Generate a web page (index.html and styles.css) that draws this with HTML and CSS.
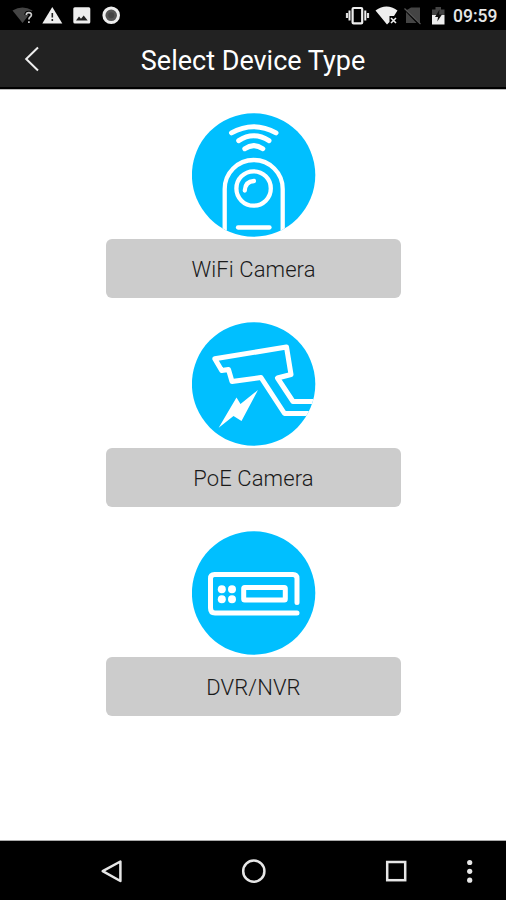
FILE: index.html
```html
<!DOCTYPE html>
<html lang="en">
<head>
<meta charset="utf-8">
<title>Select Device Type</title>
<link rel="stylesheet" href="styles.css">
</head>
<body>
<div class="screen">
  <div class="status">
    <svg width="130" height="30" viewBox="0 0 130 30">
      <path d="M12.500 10.500Q22.500 4.500 32.500 10.500L22.500 23Z" fill="#444"/>
      <path d="M26.300 15Q26.300 12.700 28.900 12.700T31.400 15Q31.400 16.300 29.900 17.200Q28.900 17.800 28.900 19.500M28.900 21.200V23" fill="none" stroke="#000" stroke-width="4"/>
      <path d="M26.300 15Q26.300 12.700 28.900 12.700T31.400 15Q31.400 16.300 29.900 17.200Q28.900 17.800 28.900 19.500M28.900 21.200V23" fill="none" stroke="#ccc" stroke-width="1.700"/>
      <path d="M52.300 7L62.300 23.500H42.300Z" fill="#eee"/>
      <path d="M52.300 13V17.500M52.300 19V21" stroke="#222" stroke-width="1.600"/>
      <rect x="73.300" y="7.300" width="17" height="16.200" rx="1.500" fill="#eee"/>
      <path d="M76 20.500L79 16.500L81 18.800L83.700 15.500L87.700 20.500Z" fill="#222"/>
      <circle cx="111.200" cy="15.300" r="7.300" fill="#555" stroke="#eee" stroke-width="3"/>
      <circle cx="111.200" cy="15.300" r="3" fill="#444"/>
    </svg>
    <div class="status-right">
      <svg width="112" height="30" viewBox="340 0 112 30">
        <rect x="352.600" y="8" width="9.600" height="15.400" rx="1" fill="none" stroke="#eee" stroke-width="2.200"/>
        <path d="M349.500 10.500V20.500M365.300 10.500V20.500" stroke="#eee" stroke-width="2"/>
        <path d="M347 13V18M368 13V18" stroke="#ddd" stroke-width="2.200"/>
        <path d="M375.500 10.500Q386.500 2.500 397.500 10.500L394 16H389.500V22L387 24.500Z" fill="#eee"/>
        <path d="M391 18L396 23M396 18L391 23" stroke="#eee" stroke-width="1.600"/>
        <path d="M411 7.500H420V23L406 10.500ZM406 12V23H416.500Z" fill="#444"/>
        <path d="M404.500 8.500L420.500 24" stroke="#555" stroke-width="1.200"/>
        <path d="M432 15V9.500H435.500V7H441V9.500H444.500V15Z" fill="#444"/>
        <path d="M432 15H444.500V24.500H432Z" fill="#eee"/>
        <path d="M439.500 9.500L435 17H438L437.300 21.500L442 14.500H439Z" fill="#111"/>
      </svg>
      <span class="clock">09:59</span>
    </div>
  </div>
  <header class="bar">
    <svg class="back" width="20" height="28" viewBox="0 0 20 28"><path d="M15 2.500L3.200 14L15 25.500" fill="none" stroke="#eee" stroke-width="2"/></svg>
    <h1>Select Device Type</h1>
  </header>
  <main>
    <section class="device">
      <svg width="124" height="124" viewBox="7 5 124 124">
        <defs><clipPath id="disc"><circle cx="68.600" cy="67" r="61.700"/></clipPath></defs>
        <circle cx="68.600" cy="67" r="61.700" fill="#00bfff"/>
        <g class="line" clip-path="url(#disc)">
          <path class="waves" d="M46.500 24.900Q68.600 12.500 91 24.900M53.700 32.600Q68.600 23 84 32.600M59.800 40.700Q68.600 34.500 77.800 40.700"/>
          <path d="M39.700 130V81A29 29 0 0 1 97.700 81V130"/>
          <circle cx="68.600" cy="80.500" r="17.200"/>
          <path d="M59.800 82.500Q60.200 73.500 69 73"/>
          <path d="M53 119.500H84.500"/>
        </g>
      </svg>
      <button>WiFi Camera</button>
    </section>
    <section class="device">
      <svg width="124" height="124" viewBox="7 5 124 124">
        <circle cx="68.600" cy="67" r="61.700" fill="#00bfff"/>
        <g class="line sharp" clip-path="url(#disc)">
          <path d="M135 84.500H108L92.500 61L106 57.500L101.500 30L29.800 41.800L36.700 53.500L43.500 52.500L47 64.500L76 60.500L99.500 96.500H135"/>
        </g>
        <path d="M73 73L55.500 87L51.500 80.500L33.700 110.700L48.500 99L56.500 104Z" fill="#fff"/>
      </svg>
      <button>PoE Camera</button>
    </section>
    <section class="device">
      <svg width="124" height="124" viewBox="7 5 124 124">
        <circle cx="68.600" cy="67" r="61.700" fill="#00bfff"/>
        <g class="line dvr">
          <path d="M112 76.500V52.500Q112 48.500 108 48.500H29.500Q25.500 48.500 25.500 52.500V82Q25.500 87 30 87H112"/>
          <rect x="58.700" y="61.500" width="41.600" height="12.500" rx="1"/>
        </g>
        <g fill="#fff"><circle cx="36.800" cy="63.200" r="4"/><circle cx="47" cy="63.200" r="4"/><circle cx="36.800" cy="73.300" r="4"/><circle cx="47" cy="73.300" r="4"/></g>
      </svg>
      <button>DVR/NVR</button>
    </section>
  </main>
  <nav>
    <svg width="506" height="59" viewBox="0 841 506 59" fill="none" stroke="#e6e6e6" stroke-width="2.500">
      <path d="M120.400 861.500V881L102.700 871.200Z" stroke-linejoin="round"/>
      <circle cx="253.800" cy="871.200" r="10.600"/>
      <rect x="387.200" y="862" width="18" height="18.200"/>
      <g fill="#e6e6e6" stroke="none"><circle cx="469.700" cy="862.500" r="2.600"/><circle cx="469.700" cy="871.300" r="2.600"/><circle cx="469.700" cy="880.200" r="2.600"/></g>
    </svg>
  </nav>
</div>
</body>
</html>
```
FILE: styles.css
```css
body {
  margin: 0;
  background: #fff;
  font-family: Roboto, "Liberation Sans", sans-serif;
}
svg {
  display: block;
}
.screen {
  display: flex;
  flex-direction: column;
  width: 506px;
  height: 900px;
  overflow: hidden;
}
.status {
  display: flex;
  justify-content: space-between;
  flex: none;
  height: 30px;
  background: #000;
}
.status-right {
  display: flex;
  width: 166px;
}
.clock {
  color: #e6e6e6;
  font-size: 17.500px;
  font-weight: 500;
  line-height: 32px;
  margin-left: 1px;
}
.bar {
  display: grid;
  grid-template-columns: 70px 1fr 70px;
  align-items: center;
  flex: none;
  box-sizing: border-box;
  height: 59px;
  background: #222;
  border-bottom: 2px solid #000;
  box-shadow: 0 1px 0 #bbb;
}
.back {
  margin-left: 23px;
}
h1 {
  margin: 4px 0 0;
  color: #fff;
  font-size: 27px;
  font-weight: 400;
  line-height: 32px;
  text-align: center;
  white-space: nowrap;
}
main {
  display: flex;
  flex-direction: column;
  flex: 1;
  gap: 24px;
  padding: 24px 0 0 106px;
}
.device {
  display: flex;
  flex-direction: column;
  gap: 2px;
  width: 295px;
}
.device svg {
  margin-left: 86px;
}
button {
  width: 295px;
  height: 59px;
  padding: 2px 0 0;
  border: 0;
  border-radius: 6px;
  background: #ccc;
  color: #1a1a1a;
  font-family: inherit;
  font-size: 22px;
  font-weight: 300;
  letter-spacing: 0.1px;
}
.line {
  fill: none;
  stroke: #fff;
  stroke-width: 4.300;
  stroke-linecap: round;
}
.waves {
  stroke-width: 5;
}
.sharp {
  stroke-width: 5;
  stroke-linejoin: round;
}
.dvr {
  stroke-width: 5;
}
nav {
  flex: none;
  height: 59px;
  background: #000;
  box-shadow: 0 -1px 0 #aaa;
}
```
